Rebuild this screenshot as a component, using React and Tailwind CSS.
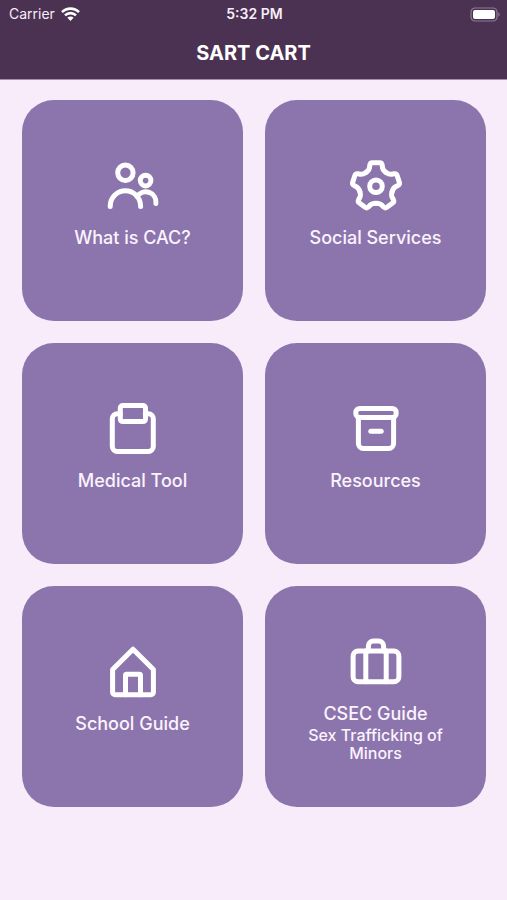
import React from "react";

function PeopleIcon() {
  return (
    <>
      <circle cx="22.4" cy="16.8" r="7.7" />
      <circle cx="42.6" cy="24.6" r="5.3" />
      <path d="M7.2 50.5V50a15.2 15.2 0 0 1 30.4 0v.5" />
      <path d="M34.1 40.4A10.3 10.3 0 0 1 52.9 47.4" />
    </>
  );
}

// one tooth of the gear, repeated every 72 degrees
const TOOTH =
  "M-10 -13.75C-8.2 -15.1 -6.8 -16.4 -6.5 -18.6L-6.2 -21Q-5.8 -23.4 -3.6 -23.4H3.6Q5.8 -23.4 6.2 -21L6.5 -18.6C6.8 -16.4 8.2 -15.1 10 -13.75";

function GearIcon() {
  return (
    <g transform="translate(30 30.2)">
      {[0, 72, 144, 216, 288].map((angle) => (
        <path key={angle} d={TOOTH} transform={`rotate(${angle})`} />
      ))}
      <circle r="6.3" />
    </g>
  );
}

function ClipboardIcon() {
  return (
    <>
      <path d="M17.3 14.8h-3a5 5 0 0 0-5 5v27.7a5 5 0 0 0 5 5h31a5 5 0 0 0 5-5V19.8a5 5 0 0 0-5-5h-3" />
      <rect x="17.3" y="6.6" width="25.2" height="16" rx="2.5" />
    </>
  );
}

function ArchiveIcon() {
  return (
    <>
      <rect x="9.8" y="9.4" width="40.4" height="9" rx="4" />
      <path d="M12.4 18.4v26a5 5 0 0 0 5 5h25.2a5 5 0 0 0 5-5v-26" />
      <path d="M24.8 32.2h10.4" />
    </>
  );
}

function HouseIcon() {
  return (
    <>
      <path d="M9.6 27.6L30 7.2L50.4 27.6V50.3a2.5 2.5 0 0 1-2.5 2.5H12.1a2.5 2.5 0 0 1-2.5-2.5z" />
      <path d="M22.5 52.8V33.2a1 1 0 0 1 1-1h13a1 1 0 0 1 1 1V52.8" />
    </>
  );
}

function SuitcaseIcon() {
  return (
    <>
      <rect x="7.1" y="19" width="45.8" height="30.7" rx="5" />
      <path d="M22.4 19v-5a5 5 0 0 1 5-5h5.2a5 5 0 0 1 5 5v5" />
      <path d="M19.8 19v30.7M40.2 19v30.7" />
    </>
  );
}

const items = [
  { title: "What is CAC?", Icon: PeopleIcon },
  { title: "Social Services", Icon: GearIcon },
  { title: "Medical Tool", Icon: ClipboardIcon },
  { title: "Resources", Icon: ArchiveIcon },
  { title: "School Guide", Icon: HouseIcon },
  { title: "CSEC Guide", subtitle: "Sex Trafficking of Minors", Icon: SuitcaseIcon },
];

function StatusBar() {
  return (
    <div className="grid h-7 grid-cols-3 items-center pr-[7px] pl-[9px] text-[#f6eef8]">
      <div className="flex items-center gap-[6px] text-sm">
        <span>Carrier</span>
        <svg width="19" height="14" viewBox="0 0 19 14" fill="none" stroke="white" strokeWidth="2.6" aria-hidden="true">
          <path d="M1 5.2a12 12 0 0 1 17 0" />
          <path d="M4 8.4a7.8 7.8 0 0 1 11 0" />
          <path d="M9.5 14L6.4 10.8a4.4 4.4 0 0 1 6.2 0z" fill="white" stroke="none" />
        </svg>
      </div>
      <span className="text-center text-sm font-semibold">5:32 PM</span>
      <svg className="justify-self-end" width="30" height="15" viewBox="0 0 30 15" aria-hidden="true">
        <rect x="1" y="1" width="26" height="13" rx="4" fill="none" stroke="#8f7d95" strokeWidth="1.2" />
        <rect x="3" y="3" width="22" height="9" rx="2" fill="white" />
        <path d="M28.3 5.2v4.6a2.6 2.6 0 0 0 0-4.6z" fill="#8f7d95" />
      </svg>
    </div>
  );
}

function Card({ title, subtitle, Icon }) {
  return (
    <button
      type="button"
      className="flex aspect-square flex-col items-center justify-center rounded-[32px] bg-[#8c75ad] px-8 text-[#fbf3fd]"
    >
      <svg
        width="60"
        height="60"
        viewBox="0 0 60 60"
        fill="none"
        stroke="white"
        strokeWidth="5"
        strokeLinecap="round"
        strokeLinejoin="round"
        aria-hidden="true"
      >
        <Icon />
      </svg>
      <span className="mt-[10px] text-lg leading-6 font-medium">{title}</span>
      <span className="min-h-4 text-base leading-[18px] font-medium">{subtitle}</span>
    </button>
  );
}

function App() {
  return (
    <div className="min-h-screen bg-[#f8ecfb] font-['Inter',sans-serif]">
      <header className="border-b border-[#a08fa6] bg-[#4b3152] pb-3">
        <StatusBar />
        <h1 className="pt-3 text-center text-xl leading-[27px] font-bold text-white">SART CART</h1>
      </header>
      <main className="grid grid-cols-2 gap-[22px] pt-5 pr-[21px] pb-5 pl-[22px]">
        {items.map((item) => (
          <Card key={item.title} {...item} />
        ))}
      </main>
    </div>
  );
}

export default App;
